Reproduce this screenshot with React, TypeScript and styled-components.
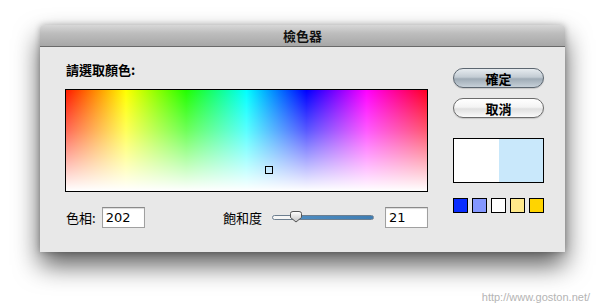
import React from "react";
import styled, { createGlobalStyle } from "styled-components";

const GlobalStyle = createGlobalStyle`
  html, body {
    margin: 0;
    padding: 0;
    background: #ffffff;
  }
  body {
    font-family: "Noto Sans CJK TC", "Liberation Sans", sans-serif;
    color: #000;
  }
`;

const Page = styled.div`
  position: relative;
  width: 604px;
  height: 308px;
  padding: 25px 0 0 40px;
  box-sizing: border-box;
  overflow: hidden;
`;

const Dialog = styled.div`
  width: 525px;
  height: 227px;
  background: #e8e8e8;
  border-radius: 4px 4px 0 0;
  box-shadow: 0 13px 26px rgba(0, 0, 0, 0.65), 0 0 6px rgba(0, 0, 0, 0.25);
  display: flex;
  flex-direction: column;
`;

const TitleBar = styled.div`
  height: 21px;
  flex: none;
  border-radius: 4px 4px 0 0;
  background: linear-gradient(#d8d8d8, #bdbdbd 40%, #a7a7a7);
  border-bottom: 1px solid #6a6a6a;
  display: flex;
  align-items: center;
  justify-content: center;
  font-size: 13px;
  font-weight: 700;
  color: #111;
  line-height: 1;
`;

const Body = styled.div`
  flex: 1;
  display: flex;
  justify-content: space-between;
  padding: 15px 21px 0 25px;
`;

const LeftColumn = styled.div`
  width: 363px;
  display: flex;
  flex-direction: column;
`;

const Label = styled.div`
  font-size: 13px;
  line-height: 16px;
  font-weight: 700;
  padding-left: 1px;
`;

const Spectrum = styled.div`
  position: relative;
  margin-top: 11px;
  height: 103px;
  box-sizing: border-box;
  border: 1px solid #000;
  background:
    linear-gradient(to bottom, rgba(255, 255, 255, 0) 0%, rgba(255, 255, 255, 0.35) 40%, #ffffff 100%),
    linear-gradient(
      to right,
      #ff1a00 0%,
      #ffff00 16.6%,
      #22ff00 33.3%,
      #00ffff 50%,
      #0000ff 66.6%,
      #ff00ff 83.3%,
      #ff0022 100%
    );
`;

const Marker = styled.div`
  position: absolute;
  width: 6px;
  height: 6px;
  border: 1px solid #000;
  background: transparent;
  transform: translate(-4px, -4px);
`;

const ControlRow = styled.div`
  margin-top: 15px;
  height: 21px;
  display: flex;
  align-items: center;
  justify-content: space-between;
`;

const Group = styled.div`
  display: flex;
  align-items: center;
`;

const FieldLabel = styled.span`
  font-size: 13px;
  line-height: 16px;
  padding-left: 1px;
`;

const NumberBox = styled.div<{ $gap: number }>`
  width: 43px;
  height: 21px;
  box-sizing: border-box;
  margin-left: ${(p) => p.$gap}px;
  background: #fff;
  border: 1px solid #a0a0a0;
  border-top-color: #8a8a8a;
  box-shadow: inset 0 1px 1px rgba(0, 0, 0, 0.15);
  font-family: "DejaVu Sans", "Liberation Sans", sans-serif;
  font-size: 13px;
  line-height: 19px;
  padding-left: 3px;
`;

const SliderTrack = styled.div`
  position: relative;
  margin-left: 10px;
  width: 102px;
  height: 5px;
  border-radius: 3px;
  border: 1px solid #6d7f90;
  box-sizing: border-box;
  background: linear-gradient(to right, #f6f6f6 0%, #f6f6f6 22%, #4e8dc2 22%, #3e7db3 100%);
`;

const Thumb = styled.svg`
  position: absolute;
  top: -6px;
  left: 13px;
`;

const RightColumn = styled.div`
  width: 91px;
  padding-top: 6px;
  display: flex;
  flex-direction: column;
`;

const PillButton = styled.div<{ $primary?: boolean }>`
  height: 20px;
  box-sizing: border-box;
  margin-bottom: 10px;
  border-radius: 10px;
  border: 1px solid ${(p) => (p.$primary ? "#5c6670" : "#6b6b6b")};
  background: ${(p) =>
    p.$primary
      ? "linear-gradient(#e6ebef 0%, #c3ccd4 45%, #9fabb6 55%, #c6d0d8 100%)"
      : "linear-gradient(#ffffff 0%, #f4f4f4 45%, #e0e0e0 55%, #fafafa 100%)"};
  box-shadow: 0 1px 1px rgba(0, 0, 0, 0.15);
  display: flex;
  align-items: center;
  justify-content: center;
  font-size: 13px;
  font-weight: 700;
  line-height: 1;
`;

const Preview = styled.div`
  margin-top: 10px;
  height: 45px;
  box-sizing: border-box;
  border: 1px solid #000;
  display: flex;
`;

const PreviewHalf = styled.div<{ $color: string }>`
  flex: 1;
  background: ${(p) => p.$color};
`;

const Swatches = styled.div`
  margin-top: 15px;
  display: flex;
  justify-content: space-between;
`;

const Swatch = styled.div<{ $color: string }>`
  width: 15px;
  height: 15px;
  box-sizing: border-box;
  border: 1px solid #000;
  background: ${(p) => p.$color};
`;

const Watermark = styled.div`
  position: absolute;
  right: 14px;
  bottom: 5px;
  font-family: "Liberation Sans", "DejaVu Sans", sans-serif;
  font-size: 11px;
  color: #b4b4b4;
  text-shadow: 0 1px 0 #fff;
`;

const hue = 202;
const saturation = 21;
const swatches = ["#0a2dff", "#8497ff", "#ffffff", "#ffe98a", "#ffd400"];

export default function App() {
  return (
    <>
      <GlobalStyle />
      <Page>
        <Dialog>
          <TitleBar>檢色器</TitleBar>
          <Body>
            <LeftColumn>
              <Label>請選取顏色:</Label>
              <Spectrum>
                <Marker style={{ left: `${(hue / 360) * 100}%`, top: `${(1 - saturation / 100) * 100}%` }} />
              </Spectrum>
              <ControlRow>
                <Group>
                  <FieldLabel>色相:</FieldLabel>
                  <NumberBox $gap={6}>202</NumberBox>
                </Group>
                <Group>
                  <FieldLabel>飽和度</FieldLabel>
                  <SliderTrack>
                    <Thumb width="20" height="15" viewBox="0 0 20 15">
                      <defs>
                        <linearGradient id="thumbFill" x1="0" y1="0" x2="0" y2="1">
                          <stop offset="0" stopColor="#ffffff" />
                          <stop offset="1" stopColor="#c4c4c4" />
                        </linearGradient>
                      </defs>
                      <path
                        d="M4.5 3.5 Q4.5 1.5 7 1.5 L13 1.5 Q15.5 1.5 15.5 3.5 L15.5 7.5 L10 12 L4.5 7.5 Z"
                        fill="url(#thumbFill)"
                        stroke="#555"
                        strokeWidth="1"
                      />
                    </Thumb>
                  </SliderTrack>
                  <NumberBox $gap={11}>21</NumberBox>
                </Group>
              </ControlRow>
            </LeftColumn>
            <RightColumn>
              <PillButton $primary>確定</PillButton>
              <PillButton>取消</PillButton>
              <Preview>
                <PreviewHalf $color="#ffffff" />
                <PreviewHalf $color="#c9e8fb" />
              </Preview>
              <Swatches>
                {swatches.map((c, i) => (
                  <Swatch key={i} $color={c} />
                ))}
              </Swatches>
            </RightColumn>
          </Body>
        </Dialog>
        <Watermark>http://www.goston.net/</Watermark>
      </Page>
    </>
  );
}
